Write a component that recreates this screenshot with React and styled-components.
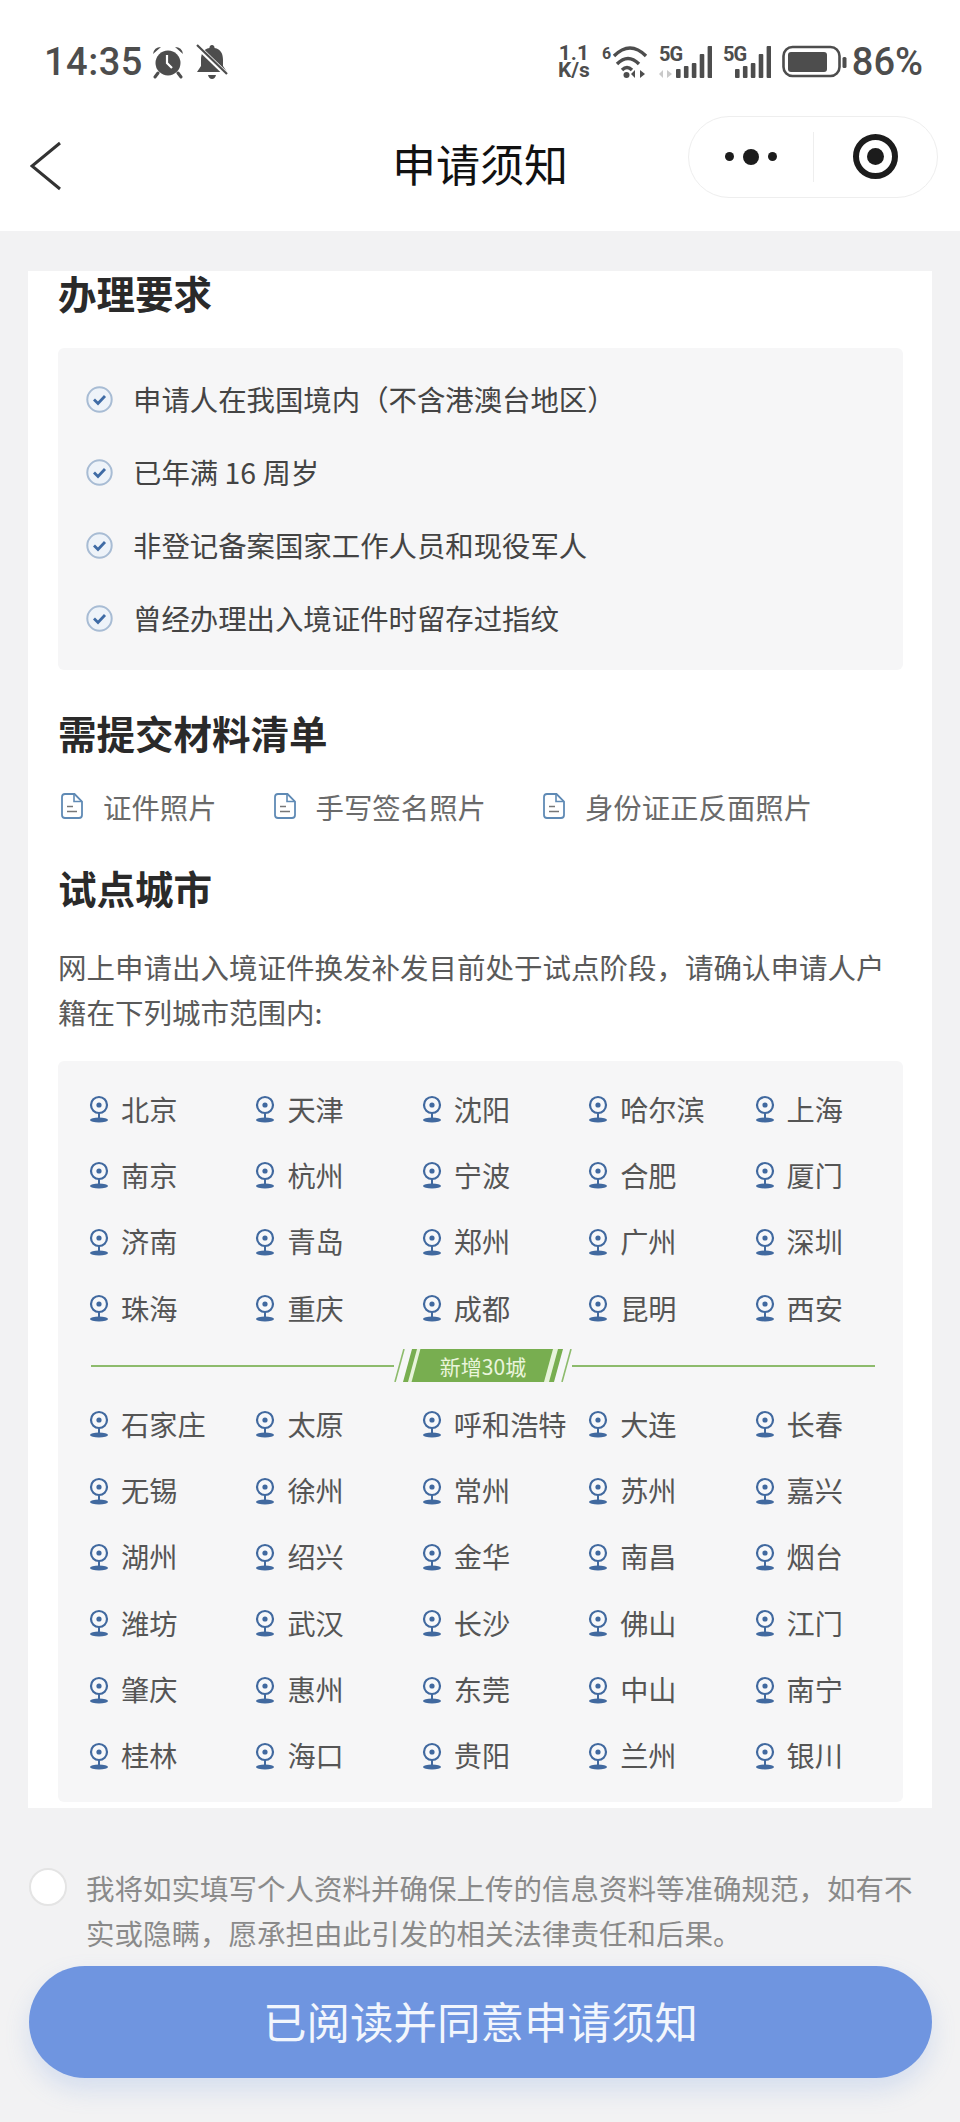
import React from 'react'
import styled, { createGlobalStyle } from 'styled-components'

const requirements = [
  '申请人在我国境内（不含港澳台地区）',
  '已年满 16 周岁',
  '非登记备案国家工作人员和现役军人',
  '曾经办理出入境证件时留存过指纹',
]

const materials = ['证件照片', '手写签名照片', '身份证正反面照片']

const pilotCities = [
  '北京', '天津', '沈阳', '哈尔滨', '上海',
  '南京', '杭州', '宁波', '合肥', '厦门',
  '济南', '青岛', '郑州', '广州', '深圳',
  '珠海', '重庆', '成都', '昆明', '西安',
]

const newCities = [
  '石家庄', '太原', '呼和浩特', '大连', '长春',
  '无锡', '徐州', '常州', '苏州', '嘉兴',
  '湖州', '绍兴', '金华', '南昌', '烟台',
  '潍坊', '武汉', '长沙', '佛山', '江门',
  '肇庆', '惠州', '东莞', '中山', '南宁',
  '桂林', '海口', '贵阳', '兰州', '银川',
]

function AlarmIcon() {
  return (
    <svg width="34" height="34" viewBox="0 0 34 34">
      <circle cx="17" cy="18" r="12.5" fill="#4d4d4d" />
      <path d="M2 9 Q3 2 10 2 Z M32 9 Q31 2 24 2 Z" fill="#4d4d4d" />
      <path d="M7 28 L4 32 M27 28 L30 32" stroke="#4d4d4d" strokeWidth="3" strokeLinecap="round" />
      <path d="M16 10 V18 L21 23" fill="none" stroke="#fff" strokeWidth="2.2" />
    </svg>
  )
}

function BellOffIcon() {
  return (
    <svg width="32" height="36" viewBox="0 0 32 36">
      <path
        d="M16 1 a2.5 2.5 0 0 1 2.5 3 C25 5 27 10 27 16 V22 L31 28 H1 L5 22 V16 C5 10 7 5 13.5 4 A2.5 2.5 0 0 1 16 1 Z"
        fill="#4d4d4d"
      />
      <path d="M12 31 H20 Q19 35 16 35 Q13 35 12 31 Z" fill="#4d4d4d" />
      <path d="M1 2 L31 31" stroke="#fff" strokeWidth="5" />
      <path d="M1 1 L31 30" stroke="#4d4d4d" strokeWidth="2.2" />
    </svg>
  )
}

function WifiIcon() {
  return (
    <svg width="46" height="50" viewBox="0 -8 46 50">
      <text x="0" y="14" fontFamily="Roboto, sans-serif" fontWeight="700" fontSize="16" fill="#4d4d4d">6</text>
      <g fill="none" stroke="#4d4d4d" strokeWidth="3.4">
        <path d="M12 11 Q28 -5 44 11" />
        <path d="M15 19 Q26 8 37 19" />
        <path d="M20 25 Q25 20 30 25" />
      </g>
      <circle cx="24.5" cy="30" r="3" fill="#4d4d4d" />
      <path d="M33 25 V33 L29 29 Z M38 25 V33 L43 29 Z" fill="#4d4d4d" />
    </svg>
  )
}

function SignalIcon({ offset, arrows }) {
  const bars = [9, 12, 15, 24, 32]
  const step = 7.9
  return (
    <svg width={offset + 36} height="50" viewBox={`0 -8 ${offset + 36} 50`}>
      <text x="0" y="16" fontFamily="Roboto, sans-serif" fontWeight="700" fontSize="20" letterSpacing="-1" fill="#4d4d4d">5G</text>
      {arrows && <path d="M4 25 V33 L0 29 Z M8 25 V33 L13 29 Z" fill="#c9c9c9" />}
      {bars.map((h, i) => (
        <rect key={i} x={offset + i * step} y={33 - h} width="4.6" height={h} rx="1" fill="#4d4d4d" />
      ))}
    </svg>
  )
}

function BatteryIcon() {
  return (
    <svg width="65" height="34" viewBox="0 0 65 34">
      <rect x="1.5" y="2" width="56" height="29" rx="9" fill="none" stroke="#4d4d4d" strokeWidth="2.6" />
      <rect x="6" y="7" width="39" height="20" rx="3" fill="#4d4d4d" />
      <rect x="60.5" y="12" width="4" height="11" rx="1.5" fill="#4d4d4d" />
    </svg>
  )
}

function BackIcon() {
  return (
    <svg width="32" height="50" viewBox="0 0 32 50">
      <path d="M30 2 L2 25 L30 48" fill="none" stroke="#333" strokeWidth="3" />
    </svg>
  )
}

function CheckIcon() {
  return (
    <svg width="27" height="27" viewBox="0 0 27 27">
      <circle cx="13.5" cy="13.5" r="12.2" fill="#eef3f9" stroke="#a8bcd4" strokeWidth="2" />
      <path d="M8 13.5 L12 17.5 L19 10" fill="none" stroke="#3f6ba5" strokeWidth="2.8" />
    </svg>
  )
}

function DocIcon() {
  return (
    <svg width="22" height="26" viewBox="0 0 22 26">
      <path
        d="M4 1 H13.5 L21 8.5 V22 Q21 25 18 25 H4 Q1 25 1 22 V4 Q1 1 4 1 Z"
        fill="none"
        stroke="#5f8ab5"
        strokeWidth="1.8"
      />
      <path d="M13 1.5 V8.5 H20.5" fill="none" stroke="#5f8ab5" strokeWidth="1.6" />
      <path d="M6 13.5 H12 M6 18.5 H16" stroke="#777" strokeWidth="1.6" />
    </svg>
  )
}

function PinIcon() {
  return (
    <svg width="20" height="28" viewBox="0 0 20 28">
      <circle cx="10" cy="10" r="8" fill="#f7f8fa" stroke="#41699f" strokeWidth="2.2" />
      <circle cx="10" cy="10" r="2.6" fill="#41699f" />
      <path d="M10 18 V24" stroke="#41699f" strokeWidth="2" />
      <ellipse cx="10" cy="25" rx="9" ry="2.4" fill="#41699f" />
    </svg>
  )
}

function Slashes({ flip }) {
  return (
    <SlashArt width="28" height="33" viewBox="0 0 28 33" $flip={flip}>
      <path d="M11 33 L20 0 H28 L19 33 Z" fill="#e7f3da" />
      <path d="M9 33 L18 0 H23 L14 33 Z" fill="#78ae50" />
      <path d="M1 33 L10 0" stroke="#8dbb6c" strokeWidth="1.6" fill="none" />
    </SlashArt>
  )
}

function CityGrid({ cities }) {
  return (
    <Cities>
      {cities.map((name) => (
        <City key={name}>
          <PinIcon />
          <CityName>{name}</CityName>
        </City>
      ))}
    </Cities>
  )
}

export default function App() {
  return (
    <Page>
      <GlobalStyle />
      <StatusBar>
        <StatusGroup>
          <Clock>14:35</Clock>
          <AlarmIcon />
          <BellOffIcon />
        </StatusGroup>
        <StatusGroup>
          <NetSpeed>
            <span>1.1</span>
            <span>K/s</span>
          </NetSpeed>
          <WifiIcon />
          <SignalIcon offset={17} arrows />
          <SignalIcon offset={12} />
          <BatteryIcon />
          <Percent>86%</Percent>
        </StatusGroup>
      </StatusBar>

      <NavBar>
        <BackIcon />
        <NavTitle>申请须知</NavTitle>
        <Capsule>
          <CapsuleHalf>
            <Dot />
            <Dot $big />
            <Dot />
          </CapsuleHalf>
          <CapsuleHalf>
            <TargetRing />
          </CapsuleHalf>
        </Capsule>
      </NavBar>

      <Card>
        <SectionTitle>办理要求</SectionTitle>
        <RequirementBox>
          {requirements.map((text) => (
            <Requirement key={text}>
              <CheckIcon />
              <RequirementText>{text}</RequirementText>
            </Requirement>
          ))}
        </RequirementBox>

        <MaterialsTitle>需提交材料清单</MaterialsTitle>
        <Materials>
          {materials.map((text) => (
            <Material key={text}>
              <DocIcon />
              <span>{text}</span>
            </Material>
          ))}
        </Materials>

        <CitiesTitle>试点城市</CitiesTitle>
        <Intro>网上申请出入境证件换发补发目前处于试点阶段，请确认申请人户籍在下列城市范围内:</Intro>
        <CityBox>
          <CityGrid cities={pilotCities} />
          <Divider>
            <DividerLine />
            <Slashes />
            <NewTag>
              <span>新增30城</span>
            </NewTag>
            <Slashes flip />
            <DividerLine />
          </Divider>
          <CityGrid cities={newCities} />
        </CityBox>
      </Card>

      <Footer>
        <Consent>
          <Radio />
          <ConsentText>我将如实填写个人资料并确保上传的信息资料等准确规范，如有不实或隐瞒，愿承担由此引发的相关法律责任和后果。</ConsentText>
        </Consent>
        <SubmitButton>已阅读并同意申请须知</SubmitButton>
      </Footer>
    </Page>
  )
}

const GlobalStyle = createGlobalStyle`
  html, body {
    margin: 0;
    padding: 0;
    background: #f2f2f3;
  }
  * {
    box-sizing: border-box;
  }
`

const Page = styled.div`
  width: 960px;
  height: 2122px;
  overflow: hidden;
  background: #f2f2f3;
  font-family: 'Noto Sans CJK SC', 'Noto Sans', sans-serif;
`

const StatusBar = styled.div`
  height: 100px;
  padding: 44px 37px 0 44px;
  display: flex;
  justify-content: space-between;
  align-items: flex-start;
  background: #fff;
`

const StatusGroup = styled.div`
  height: 36px;
  display: flex;
  align-items: center;
  gap: 11px;
`

const Clock = styled.span`
  font-family: Roboto, sans-serif;
  font-size: 38px;
  font-weight: 500;
  line-height: 36px;
  color: #4d4d4d;
  letter-spacing: 0.5px;
  margin-right: -3px;
`

const NetSpeed = styled.div`
  display: flex;
  flex-direction: column;
  align-items: center;
  margin-right: 1px;
  font-family: Roboto, sans-serif;
  font-size: 21px;
  font-weight: 700;
  color: #4d4d4d;

  span {
    display: block;
    height: 17px;
    line-height: 17px;
  }
`

const Percent = styled.span`
  font-family: Roboto, sans-serif;
  font-size: 38px;
  font-weight: 500;
  line-height: 36px;
  color: #4d4d4d;
  margin-left: -6px;
`

const NavBar = styled.div`
  height: 131px;
  padding: 0 30px;
  display: grid;
  grid-template-columns: 1fr auto 1fr;
  align-items: center;
  background: #fff;
`

const NavTitle = styled.div`
  margin-bottom: 5px;
  font-size: 44px;
  line-height: 56px;
  color: #111;
`

const Capsule = styled.div`
  justify-self: end;
  width: 250px;
  height: 82px;
  margin: 0 -8px 18px 0;
  display: flex;
  align-items: center;
  border: 1px solid #eeeeee;
  border-radius: 41px;
`

const CapsuleHalf = styled.div`
  flex: 1;
  height: 50px;
  display: flex;
  align-items: center;
  justify-content: center;
  gap: 9px;

  & + & {
    border-left: 1px solid #eeeeee;
  }
`

const Dot = styled.span`
  width: ${(p) => (p.$big ? 16 : 9)}px;
  height: ${(p) => (p.$big ? 16 : 9)}px;
  border-radius: 50%;
  background: #1c1c1c;
`

const TargetRing = styled.span`
  width: 45px;
  height: 45px;
  border-radius: 50%;
  border: 6px solid #1c1c1c;
  display: flex;
  align-items: center;
  justify-content: center;

  &::after {
    content: '';
    width: 17px;
    height: 17px;
    border-radius: 50%;
    background: #1c1c1c;
  }
`

const Card = styled.div`
  height: 1537px;
  margin: 40px 28px 0;
  padding: 0 29px 6px 30px;
  background: #fff;
`

const SectionTitle = styled.h2`
  margin: 0;
  font-size: 38.5px;
  font-weight: 700;
  line-height: 42px;
  color: #2a2a2a;
`

const MaterialsTitle = styled(SectionTitle)`
  margin-top: 41px;
`

const CitiesTitle = styled(SectionTitle)`
  margin-top: 38px;
`

const RequirementBox = styled.div`
  margin-top: 35px;
  padding: 15px 0 15px 28px;
  background: #f6f6f7;
  border-radius: 6px;
`

const Requirement = styled.div`
  height: 73px;
  display: flex;
  align-items: center;
  gap: 20px;
`

const RequirementText = styled.span`
  margin-top: -3px;
  font-size: 28.4px;
  color: #444;
`

const Materials = styled.div`
  height: 44px;
  margin-top: 31px;
  display: flex;
  align-items: center;
  gap: 54px;
`

const Material = styled.div`
  display: flex;
  align-items: center;
  gap: 20px;
  padding-left: 3px;
  font-size: 28.4px;
  color: #6a6a6a;
`

const Intro = styled.p`
  margin: 37px 0 0;
  font-size: 28.5px;
  line-height: 44.5px;
  color: #5a5a5a;
`

const CityBox = styled.div`
  height: 741px;
  margin-top: 27px;
  padding: 15px 0 8px 31px;
  background: #f6f6f7;
  border-radius: 6px;
`

const Cities = styled.div`
  display: grid;
  grid-template-columns: repeat(5, 166.4px);
  grid-auto-rows: 66.3px;
`

const City = styled.div`
  display: flex;
  align-items: center;
  gap: 12px;
  white-space: nowrap;
`

const CityName = styled.span`
  margin-top: -2px;
  font-size: 28.2px;
  color: #555;
`

const Divider = styled.div`
  height: 33px;
  margin: 8px 28px 9px 2px;
  display: flex;
  align-items: center;
`

const DividerLine = styled.div`
  flex: 1;
  height: 2px;
  background: #8dbb6c;
`

const SlashArt = styled.svg`
  flex: none;
  margin: 0 ${(p) => (p.$flip ? 0 : -6)}px 0 ${(p) => (p.$flip ? -6 : 0)}px;
  transform: ${(p) => (p.$flip ? 'scale(-1, -1)' : 'none')};
`

const NewTag = styled.div`
  width: 134px;
  height: 33px;
  display: flex;
  align-items: center;
  justify-content: center;
  background: #78ae50;
  transform: skewX(-15deg);
  font-size: 21px;
  color: #eaf5dc;

  span {
    transform: skewX(15deg);
  }
`

const Footer = styled.div`
  padding: 59px 28px 0 29px;
`

const Consent = styled.div`
  display: flex;
  align-items: flex-start;
  gap: 19px;
`

const Radio = styled.span`
  flex: none;
  width: 38px;
  height: 38px;
  margin-top: 1px;
  border-radius: 50%;
  background: #fff;
  border: 2px solid #e4e4e4;
`

const ConsentText = styled.div`
  margin-top: -2px;
  font-size: 28.5px;
  line-height: 45px;
  color: #8a8a8a;
`

const SubmitButton = styled.div`
  height: 112px;
  margin-top: 11px;
  padding-bottom: 4px;
  display: flex;
  align-items: center;
  justify-content: center;
  border-radius: 56px;
  background: #6f95e0;
  box-shadow: 0 12px 24px rgba(111, 149, 224, 0.22);
  font-size: 43.5px;
  color: #f2f6fd;
`
